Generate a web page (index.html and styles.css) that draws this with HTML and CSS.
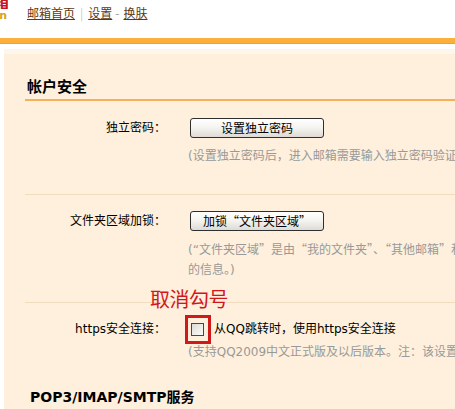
FILE: index.html
```html
<!DOCTYPE html>
<html lang="zh-CN">
<head>
<meta charset="utf-8">
<title>设置 - 帐户</title>
<link rel="stylesheet" href="styles.css">
</head>
<body>
<header class="top">
  <div class="logo">
    <span class="logo-cn">箱</span>
    <span class="logo-en">n</span>
  </div>
  <nav class="nav">
    <a href="#">邮箱首页</a><span class="sep">|</span><a href="#">设置</a><span class="dash">-</span><a href="#">换肤</a>
  </nav>
</header>
<div class="bar"></div>
<main class="panel">
  <section class="group">
    <h2 class="group-title">帐户安全</h2>
    <div class="row row-first">
      <div class="label">独立密码：</div>
      <div class="value">
        <button class="btn" type="button">设置独立密码</button>
        <p class="hint">(设置独立密码后，进入邮箱需要输入独立密码验证，以保护您的邮箱安全。)</p>
      </div>
    </div>
    <div class="row">
      <div class="label">文件夹区域加锁：</div>
      <div class="value">
        <button class="btn" type="button">加锁“文件夹区域”</button>
        <p class="hint">(“文件夹区域<span class="q">”</span>是由<span class="q">“</span>我的文件夹<span class="q">”</span>、<span class="q">“</span>其他邮箱<span class="q">”</span>和<span class="q">“</span>记事本<span class="q">”</span>组成，加锁后访问需要验证独立密码，以保护您<br>的信息。)</p>
      </div>
    </div>
    <div class="row row-last">
      <span class="note">取消勾号</span>
      <span class="note-box"></span>
      <div class="label">https安全连接：</div>
      <div class="value">
        <label class="check"><span class="checkbox"></span>从QQ跳转时，使用https安全连接</label>
        <p class="hint hint-tight">(支持QQ2009中文正式版及以后版本。注：该设置仅对QQ跳转有效。)</p>
      </div>
    </div>
  </section>
  <section class="group">
    <h2 class="group-title group-title-plain">POP3/IMAP/SMTP服务</h2>
  </section>
</main>
</body>
</html>
```

FILE: styles.css
```css
html, body {
  margin: 0;
  padding: 0;
  background: #ffffff;
  overflow: hidden;
}

body {
  font-family: "DejaVu Sans", "Noto Sans CJK SC", sans-serif;
  font-size: 12px;
  color: #000;
  width: 455px;
  height: 409px;
}

.top {
  display: flex;
  height: 38px;
}

.logo {
  width: 8px;
  overflow: hidden;
  display: flex;
  flex-direction: column;
  align-items: flex-end;
}

.logo-cn {
  font-family: "Noto Sans CJK SC", sans-serif;
  font-weight: 700;
  font-size: 16px;
  line-height: 16px;
  height: 9px;
  overflow: hidden;
  display: flex;
  align-items: flex-end;
  color: #c8161d;
  margin-right: -1px;
  white-space: nowrap;
}

.logo-en {
  font-family: "DejaVu Sans", sans-serif;
  font-weight: 700;
  font-size: 11px;
  line-height: 11px;
  color: #d9a21e;
  margin-top: 1px;
  margin-right: 1px;
}

.nav {
  margin-left: 19px;
  padding-top: 5px;
  line-height: 16px;
  font-family: "Noto Sans CJK SC", sans-serif;
  white-space: nowrap;
}

.nav a {
  color: #5e3812;
  text-decoration: underline;
}

.nav .sep {
  color: #c8c8c8;
  margin: 0 5px 0 5px;
}

.nav .dash {
  color: #999;
  margin: 0 4px 0 3px;
}

.bar {
  height: 5px;
  background: #fbb03c;
  border-bottom: 1px solid #eea233;
}

.panel {
  margin: 5px 0 0 4px;
  padding: 27px 0 20px 21px;
  background: linear-gradient(#fef6ea 0, #fef6ea 5px, #fef0dc 5px);
}

.group-title {
  margin: 0;
  padding: 0 0 3px 2px;
  font-family: "Noto Sans CJK SC", sans-serif;
  font-size: 15px;
  line-height: 20px;
  font-weight: 700;
  border-bottom: 2px solid #f2b25c;
}

.group-title-plain {
  font-family: "DejaVu Sans", "Noto Sans CJK SC", sans-serif;
  font-size: 14px;
  border-bottom: none;
  padding-left: 5px;
  margin-top: 25px;
}

.row {
  display: grid;
  grid-template-columns: 141px 1fr;
  column-gap: 24px;
  padding: 16px 0 22px;
  border-bottom: 1px solid #f1dcc0;
  position: relative;
}

.row-first {
  padding-top: 17px;
  padding-bottom: 28px;
}

.row-last {
  border-bottom: none;
  padding-bottom: 0;
}

.label {
  text-align: right;
  line-height: 20px;
  white-space: nowrap;
}

.value {
  min-width: 0;
}

.btn {
  display: block;
  width: 134px;
  height: 20px;
  padding: 0;
  margin: 0;
  border: 1px solid #2f2f2f;
  border-radius: 3px;
  background: linear-gradient(#ffffff, #f4f3ef 50%, #dedbd5);
  font-family: "Noto Sans CJK SC", sans-serif;
  font-size: 12px;
  line-height: 18px;
  color: #000;
}

.hint {
  margin: 8px 0 0 -2px;
  color: #999;
  line-height: 20px;
  white-space: nowrap;
}

.hint .q {
  font-family: "Noto Sans CJK SC", sans-serif;
}

.hint-tight {
  margin-top: 3px;
}

.check {
  display: flex;
  align-items: center;
  line-height: 20px;
  white-space: nowrap;
}

.checkbox {
  width: 11px;
  height: 11px;
  border: 1px solid #1c5180;
  background: linear-gradient(135deg, #dcdcd6, #fbfbf9);
  margin: 0 10px 0 1px;
  flex: none;
}

.note {
  position: absolute;
  left: 125px;
  top: -16px;
  font-family: "Noto Sans CJK SC", sans-serif;
  font-size: 20px;
  line-height: 24px;
  color: #d3161b;
  letter-spacing: -0.5px;
}

.note-box {
  position: absolute;
  left: 160px;
  top: 12px;
  width: 26px;
  height: 29px;
  box-sizing: border-box;
  border: 3px solid #d01a1a;
}
```
